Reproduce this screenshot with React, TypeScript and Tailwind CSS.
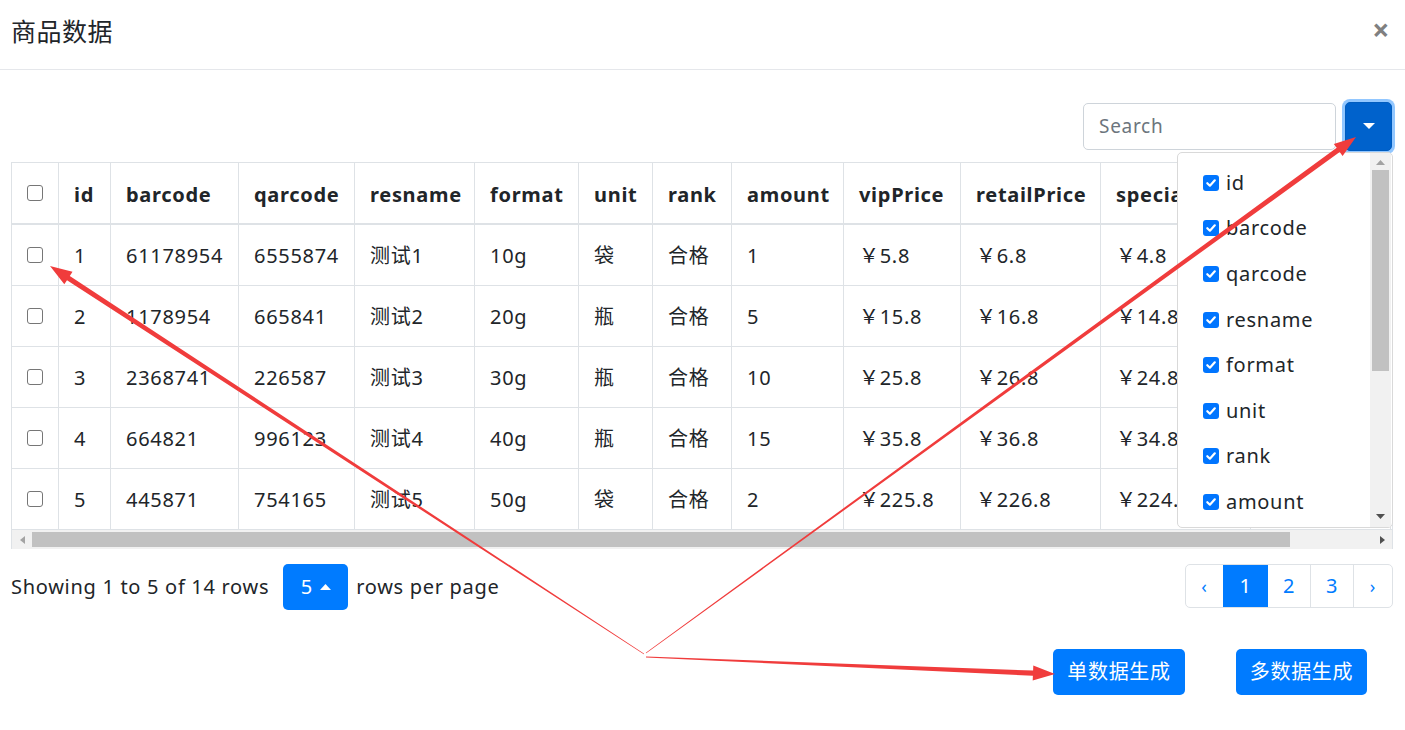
import React from 'react';

const font = "font-['Noto_Sans','Noto_Sans_CJK_SC',sans-serif]";

const columns = [
  { title: 'id', w: 'w-[52px]' },
  { title: 'barcode', w: 'w-[128px]' },
  { title: 'qarcode', w: 'w-[116px]' },
  { title: 'resname', w: 'w-[120px]' },
  { title: 'format', w: 'w-[104px]' },
  { title: 'unit', w: 'w-[74px]' },
  { title: 'rank', w: 'w-[79px]' },
  { title: 'amount', w: 'w-[112px]' },
  { title: 'vipPrice', w: 'w-[117px]' },
  { title: 'retailPrice', w: 'w-[140px]' },
  { title: 'specialPrice', w: 'w-[150px]' },
  { title: 'memberPrice', w: 'w-[140px]' },
  { title: 'number', w: 'w-[120px]' },
];

const rows = [
  ['1', '61178954', '6555874', '测试1', '10g', '袋', '合格', '1', '￥5.8', '￥6.8', '￥4.8', '￥5.0', '0'],
  ['2', '1178954', '665841', '测试2', '20g', '瓶', '合格', '5', '￥15.8', '￥16.8', '￥14.8', '￥15.0', '0'],
  ['3', '2368741', '226587', '测试3', '30g', '瓶', '合格', '10', '￥25.8', '￥26.8', '￥24.8', '￥25.0', '0'],
  ['4', '664821', '996123', '测试4', '40g', '瓶', '合格', '15', '￥35.8', '￥36.8', '￥34.8', '￥35.0', '0'],
  ['5', '445871', '754165', '测试5', '50g', '袋', '合格', '2', '￥225.8', '￥226.8', '￥224.8', '￥225.0', '0'],
];

const menuItems = ['id', 'barcode', 'qarcode', 'resname', 'format', 'unit', 'rank', 'amount'];

const Box = ({ checked }: { checked?: boolean }) =>
  checked ? (
    <span className="w-4 h-4 shrink-0 rounded-[3px] bg-[#0075ff] flex items-center justify-center">
      <svg width="12" height="12" viewBox="0 0 12 12">
        <path d="M2.3 6.2 L4.9 8.7 L9.8 3.3" fill="none" stroke="white" strokeWidth="2.2" strokeLinecap="round" strokeLinejoin="round" />
      </svg>
    </span>
  ) : (
    <span className="w-4 h-4 shrink-0 rounded-[3px] border border-[#767676] bg-white" />
  );

// tapered annotation arrow
const arrowPoints = (sx: number, sy: number, ex: number, ey: number) => {
  const dx = ex - sx;
  const dy = ey - sy;
  const len = Math.hypot(dx, dy);
  const ux = dx / len;
  const uy = dy / len;
  const nx = -uy;
  const ny = ux;
  const head = 22;
  const bx = ex - ux * head;
  const by = ey - uy * head;
  const p = (x: number, y: number) => `${x.toFixed(1)},${y.toFixed(1)}`;
  return [
    p(sx + nx * 0.4, sy + ny * 0.4),
    p(bx + nx * 2.6, by + ny * 2.6),
    p(bx + nx * 7.5, by + ny * 7.5),
    p(ex, ey),
    p(bx - nx * 7.5, by - ny * 7.5),
    p(bx - nx * 2.6, by - ny * 2.6),
    p(sx - nx * 0.4, sy - ny * 0.4),
  ].join(' ');
};

export default function App() {
  return (
    <div className={`relative w-[1405px] h-[730px] overflow-hidden bg-white text-[#212529] tracking-[0.7px] ${font}`}>
      {/* header */}
      <div className="h-[70px] flex items-center justify-between pl-[11px] pr-[15px] border-b border-[#e5e7eb]">
        <h5 className="text-[25px] leading-none -mt-[7px] tracking-[0.5px]">商品数据</h5>
        <span className="text-[30px] font-bold text-[#808080] leading-none -mt-[10px]">×</span>
      </div>

      {/* toolbar */}
      <div className="flex justify-end items-center pr-[13px] mt-[31px] h-[50px]">
        <div className="w-[253px] h-[47px] border border-[#ced4da] rounded-[5px] flex items-center pl-[15px] text-[19px] text-[#6c757d]">
          Search
        </div>
        <div className="ml-[9px] w-[47px] h-[49px] rounded-[5px] bg-[#0062cc] border border-[#005cbf] shadow-[0_0_0_3px_rgba(38,143,255,0.5)] flex items-center justify-center">
          <svg width="12" height="7" viewBox="0 0 12 7">
            <path d="M0 0 L12 0 L6 6 Z" fill="white" />
          </svg>
        </div>
      </div>

      {/* table */}
      <div className="ml-[11px] mt-[11px] w-[1382px] border-l border-t border-r border-[#dee2e6] overflow-hidden">
        <div className="flex w-max h-[62px] border-b-2 border-[#dee2e6] text-[20px] font-bold">
          <div className="w-[47px] shrink-0 border-r border-[#dee2e6] flex items-center justify-center">
            <Box />
          </div>
          {columns.map((c) => (
            <div key={c.title} className={`${c.w} shrink-0 border-r border-[#dee2e6] flex items-center pl-[15px] pt-[3px] whitespace-nowrap`}>
              {c.title}
            </div>
          ))}
        </div>
        {rows.map((r, i) => (
          <div key={i} className="flex w-max h-[61px] border-b border-[#dee2e6] text-[20px]">
            <div className="w-[47px] shrink-0 border-r border-[#dee2e6] flex items-center justify-center">
              <Box />
            </div>
            {r.map((v, j) => (
              <div key={j} className={`${columns[j].w} shrink-0 border-r border-[#dee2e6] flex items-center pl-[15px] pt-[2px] whitespace-nowrap`}>
                {v}
              </div>
            ))}
          </div>
        ))}
        {/* horizontal scrollbar */}
        <div className="h-[19px] bg-[#f1f1f1] flex items-center">
          <div className="w-[20px] flex justify-center">
            <svg width="5" height="8" viewBox="0 0 5 8">
              <path d="M5 0 L0 4 L5 8 Z" fill="#a3a3a3" />
            </svg>
          </div>
          <div className="w-[1258px] h-[15px] bg-[#c1c1c1]" />
          <div className="flex-1 flex justify-end pr-[7px]">
            <svg width="5" height="8" viewBox="0 0 5 8">
              <path d="M0 0 L5 4 L0 8 Z" fill="#505050" />
            </svg>
          </div>
        </div>
      </div>

      {/* footer */}
      <div className="flex items-center justify-between pl-[11px] pr-[12px] mt-[15px] h-[46px] text-[20px]">
        <div className="flex items-center">
          <span>Showing 1 to 5 of 14 rows</span>
          <span className="ml-[14px] w-[65px] h-[46px] rounded-[5px] bg-[#007bff] text-white flex items-center justify-center gap-[7px]">
            5
            <svg width="11" height="6" viewBox="0 0 11 6">
              <path d="M0 6 L11 6 L5.5 0 Z" fill="white" />
            </svg>
          </span>
          <span className="ml-[8px]">rows per page</span>
        </div>
        <div className="flex h-[44px] border border-[#dee2e6] rounded-[5px] overflow-hidden text-[#007bff] -mt-[2px]">
          <span className="w-[37px] flex items-center justify-center text-[18px]">‹</span>
          <span className="w-[45px] flex items-center justify-center bg-[#007bff] text-white">1</span>
          <span className="w-[43px] flex items-center justify-center border-r border-[#dee2e6]">2</span>
          <span className="w-[43px] flex items-center justify-center border-r border-[#dee2e6]">3</span>
          <span className="w-[38px] flex items-center justify-center text-[18px]">›</span>
        </div>
      </div>

      {/* action buttons */}
      <div className="flex justify-end pr-[38px] mt-[39px] gap-[51px]">
        <button className="w-[132px] h-[46px] rounded-[5px] bg-[#007bff] text-white text-[20px]">单数据生成</button>
        <button className="w-[131px] h-[46px] rounded-[5px] bg-[#007bff] text-white text-[20px]">多数据生成</button>
      </div>

      {/* columns dropdown menu */}
      <div className="absolute left-[1177px] top-[152px] w-[216px] h-[376px] bg-white border border-[#d9d9d9] rounded-[5px] overflow-hidden flex">
        <div className="flex-1 pt-[7px] pl-[25px]">
          {menuItems.map((m) => (
            <div key={m} className="h-[45.6px] flex items-center gap-[7px] text-[20px]">
              <Box checked />
              <span>{m}</span>
            </div>
          ))}
        </div>
        <div className="w-[21px] h-full bg-[#f1f1f1] flex flex-col items-center mr-[1px]">
          <svg className="mt-[7px]" width="9" height="5" viewBox="0 0 9 5">
            <path d="M0 5 L9 5 L4.5 0 Z" fill="#a3a3a3" />
          </svg>
          <div className="mt-[5px] w-[17px] h-[201px] bg-[#c1c1c1]" />
          <div className="flex-1" />
          <svg className="mb-[8px]" width="9" height="5" viewBox="0 0 9 5">
            <path d="M0 0 L9 0 L4.5 5 Z" fill="#505050" />
          </svg>
        </div>
      </div>

      {/* annotation arrows */}
      <svg className="absolute inset-0 pointer-events-none" width="1405" height="730">
        <polygon points={arrowPoints(644, 654, 50, 266)} fill="#f03c3c" />
        <polygon points={arrowPoints(646, 653, 1356, 137)} fill="#f03c3c" />
        <polygon points={arrowPoints(646, 657, 1055, 674)} fill="#f03c3c" />
      </svg>
    </div>
  );
}
